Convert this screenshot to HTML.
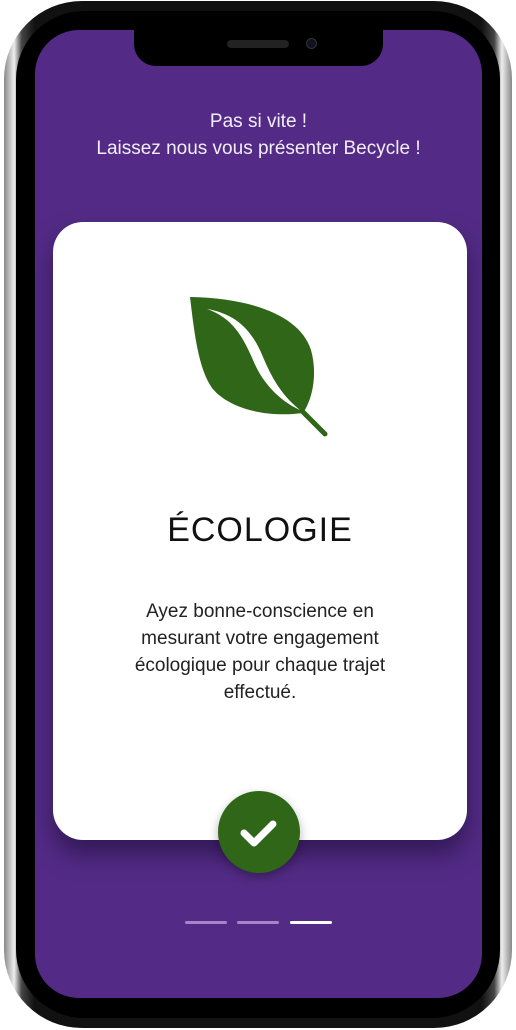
<!DOCTYPE html>
<html><head><meta charset="utf-8"><style>
html,body{margin:0;padding:0;background:#fff;width:516px;height:1030px;overflow:hidden;font-family:"Liberation Sans",sans-serif}
.phone{position:absolute;left:4px;top:1px;width:508px;height:1027px;border-radius:78px;background:linear-gradient(90deg,#888,#eee 2%,#444 3.5%,#111 6%,#111 94%,#444 96.5%,#eee 98%,#888);}
.bez{position:absolute;left:12px;top:10px;right:12px;bottom:10px;border-radius:68px;background:#000}
.screen{position:absolute;left:35px;top:30px;width:447px;height:968px;border-radius:44px;background:#532b86;overflow:hidden}
.notch{position:absolute;left:99px;top:0;width:249px;height:36px;background:#000;border-radius:0 0 22px 22px}
.spk{position:absolute;left:93px;top:10px;width:62px;height:8px;border-radius:4px;background:#222}
.cam{position:absolute;left:172px;top:8px;width:11px;height:11px;border-radius:50%;background:#112;border:1px solid #333;box-sizing:border-box}
.hdr{position:absolute;top:78px;width:100%;text-align:center;color:#f2eef8;font-size:19px;line-height:27px}
.card{position:absolute;left:18px;top:192px;width:414px;height:618px;border-radius:30px;background:#fff;box-shadow:0 14px 24px rgba(20,5,40,.5)}
.title{position:absolute;top:289px;width:100%;text-align:center;font-size:34px;color:#111;letter-spacing:1px}
.body{position:absolute;top:376px;width:100%;text-align:center;font-size:19px;line-height:27px;color:#222}
.check{position:absolute;left:183px;top:761px;width:82px;height:82px;border-radius:50%;background:#2f6618;box-shadow:0 4px 10px rgba(0,0,0,.3)}
.dot{position:absolute;top:891px;height:3px;width:42px;border-radius:2px;background:#a784c8}
</style></head><body>
<div class="phone"><div class="bez"></div></div>
<div class="screen">
<div class="notch"><div class="spk"></div><div class="cam"></div></div>
<div class="hdr">Pas si vite !<br>Laissez nous vous présenter Becycle !</div>
<div class="card">
<svg style="position:absolute;left:-53px;top:-222px" width="516" height="700">
<path d="M190,297 C250,298 300,315 311,350 C318,375 312,400 303,413 C265,418 228,408 212,388 C198,368 194,330 190,297 Z" fill="#2f6618"/>
<path d="M207,309 C232,318 242,335 253,360 C264,387 284,403 300,410 C284,397 274,383 263,357 C252,330 236,314 207,309 Z" fill="#fff"/>
<path d="M303,412 L325,434" stroke="#2f6618" stroke-width="5" stroke-linecap="round"/>
</svg>
<div class="title">ÉCOLOGIE</div>
<div class="body">Ayez bonne-conscience en<br>mesurant votre engagement<br>écologique pour chaque trajet<br>effectué.</div>
</div>
<div class="check"><svg width="82" height="82"><path d="M26,42 L36,52 L55,33" fill="none" stroke="#fff" stroke-width="7" stroke-linecap="round" stroke-linejoin="round"/></svg></div>
<div class="dot" style="left:150px"></div>
<div class="dot" style="left:202px"></div>
<div class="dot" style="left:255px;background:#fff"></div>
</div>
</body></html>
